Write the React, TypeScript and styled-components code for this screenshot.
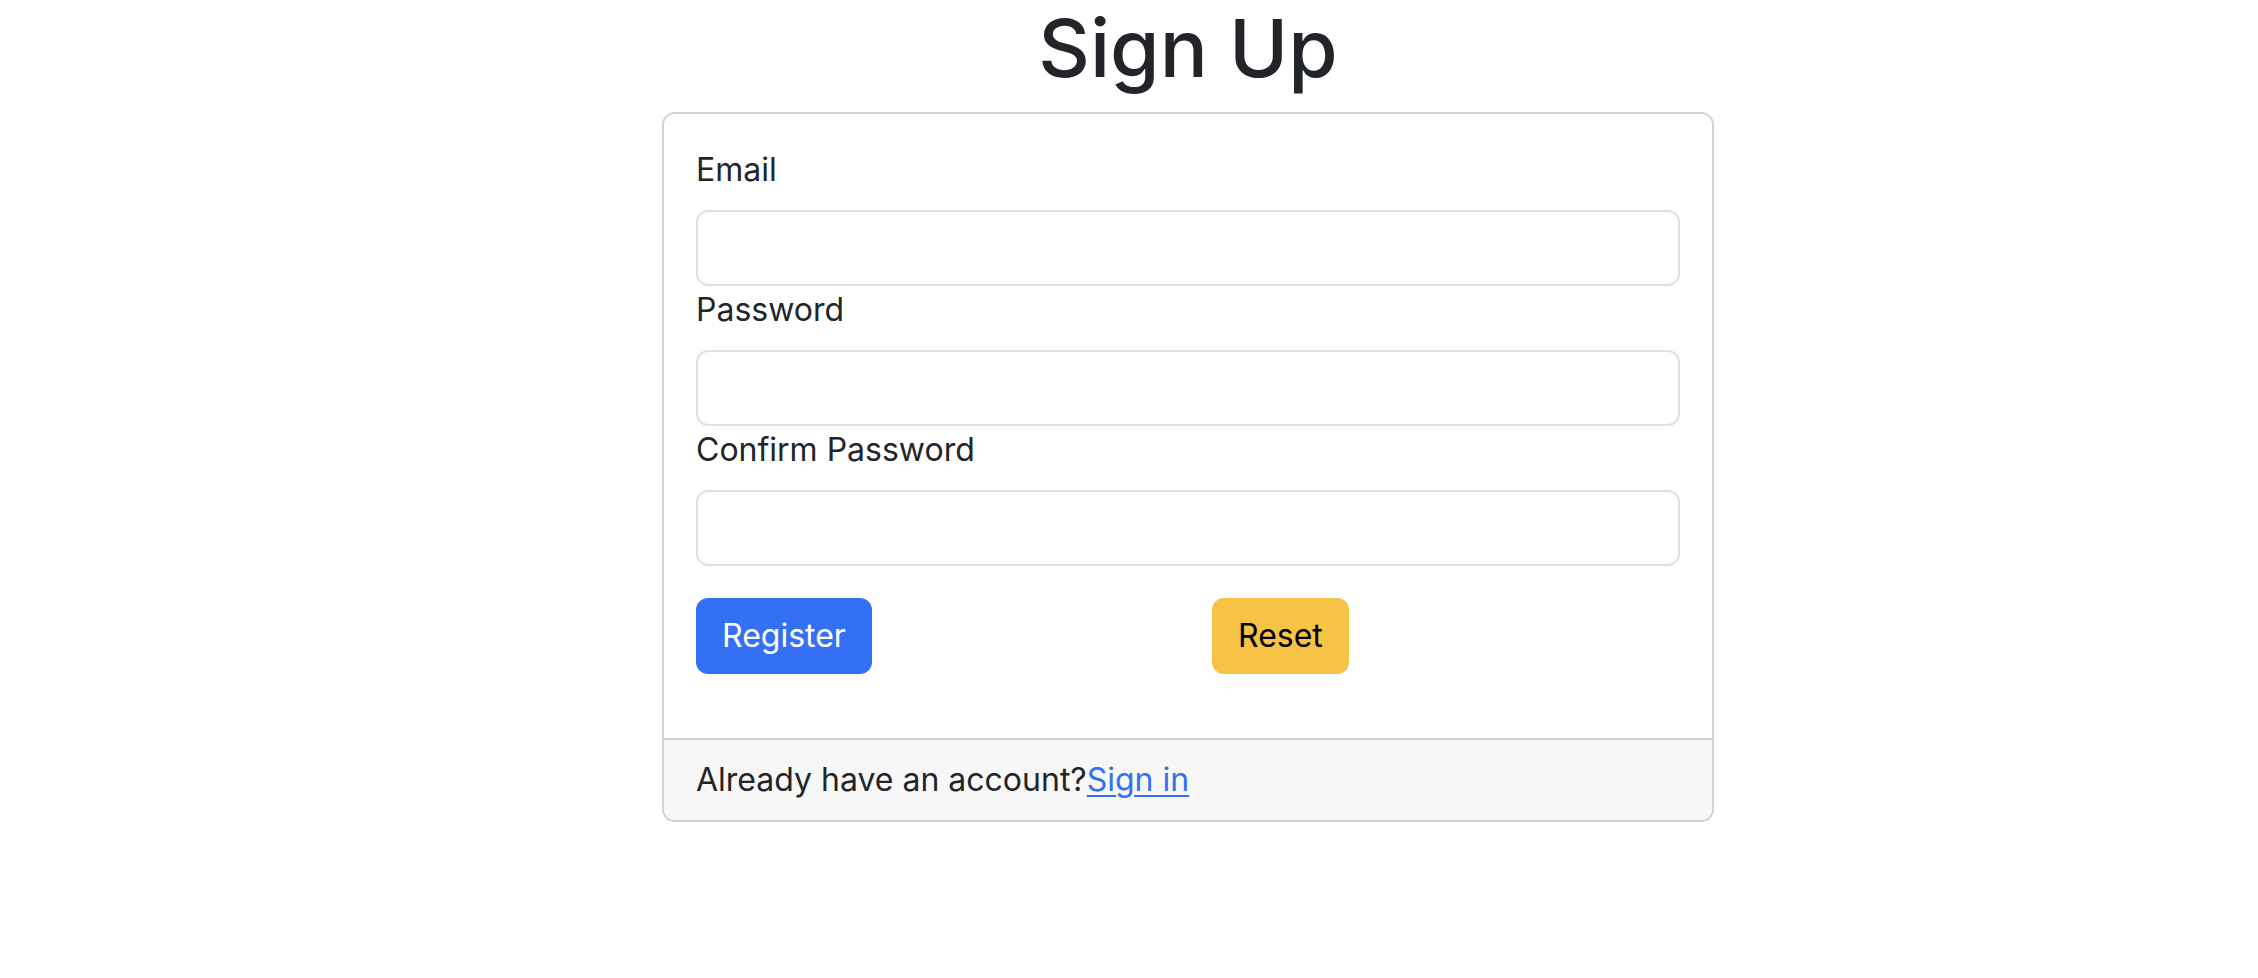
import React, { useState } from 'react';
import styled, { createGlobalStyle } from 'styled-components';

const GlobalStyle = createGlobalStyle`
  *, *::before, *::after {
    box-sizing: border-box;
  }

  body {
    margin: 0;
    background: #ffffff;
    color: #212529;
    font-family: Inter, "Noto Sans", "Liberation Sans", sans-serif;
    font-size: 32px;
    line-height: 1.5;
  }
`;

const Column = styled.div`
  width: 1052px;
  margin-left: 662px;
`;

const Title = styled.h1`
  margin: 0 0 16px 0;
  font-size: 80px;
  font-weight: 500;
  line-height: 96px;
  text-align: center;
  color: #212529;
`;

const Card = styled.div`
  display: flex;
  flex-direction: column;
  border: 2px solid #d2d2d2;
  border-radius: 13px;
  overflow: hidden;
  background: #ffffff;
`;

const CardBody = styled.form`
  padding: 32px 32px 64px 32px;
`;

const Label = styled.label`
  display: block;
  margin-bottom: 16px;
  line-height: 48px;
  color: #212529;
`;

const Input = styled.input`
  display: block;
  width: 100%;
  height: 76px;
  padding: 12px 24px;
  border: 2px solid #dee2e6;
  border-radius: 12px;
  font: inherit;
  color: #212529;
  background: #ffffff;
  outline: none;
`;

const ButtonRow = styled.div`
  display: grid;
  grid-template-columns: 1fr 1fr;
  column-gap: 48px;
  margin-top: 32px;
`;

const Button = styled.button<{ variant: 'primary' | 'warning' }>`
  justify-self: start;
  padding: 12px 24px;
  border: 2px solid transparent;
  border-radius: 12px;
  font: inherit;
  line-height: 48px;
  cursor: pointer;
  background: ${({ variant }) => (variant === 'primary' ? '#3470f5' : '#f6c344')};
  color: ${({ variant }) => (variant === 'primary' ? '#ffffff' : '#000000')};
`;

const CardFooter = styled.div`
  padding: 16px 32px;
  border-top: 2px solid #d2d2d2;
  background: #f7f7f7;
  line-height: 48px;
`;

const FooterLink = styled.a`
  color: #3470f5;
  text-decoration: underline;
  text-underline-offset: 4px;
  text-decoration-thickness: 2px;
`;

const fields = [
  { id: 'email', label: 'Email', type: 'email' },
  { id: 'password', label: 'Password', type: 'password' },
  { id: 'confirm', label: 'Confirm Password', type: 'password' },
];

const App = () => {
  const [values, setValues] = useState<Record<string, string>>({});

  const handleReset = () => setValues({});

  return (
    <>
      <GlobalStyle />
      <Column>
        <Title>Sign Up</Title>
        <Card>
          <CardBody onSubmit={(e) => e.preventDefault()}>
            {fields.map((field) => (
              <div key={field.id}>
                <Label htmlFor={field.id}>{field.label}</Label>
                <Input
                  id={field.id}
                  type={field.type}
                  value={values[field.id] || ''}
                  onChange={(e) => setValues({ ...values, [field.id]: e.target.value })}
                />
              </div>
            ))}
            <ButtonRow>
              <Button type="submit" variant="primary">Register</Button>
              <Button type="button" variant="warning" onClick={handleReset}>Reset</Button>
            </ButtonRow>
          </CardBody>
          <CardFooter>
            Already have an account?<FooterLink href="#">Sign in</FooterLink>
          </CardFooter>
        </Card>
      </Column>
    </>
  );
};

export default App;
